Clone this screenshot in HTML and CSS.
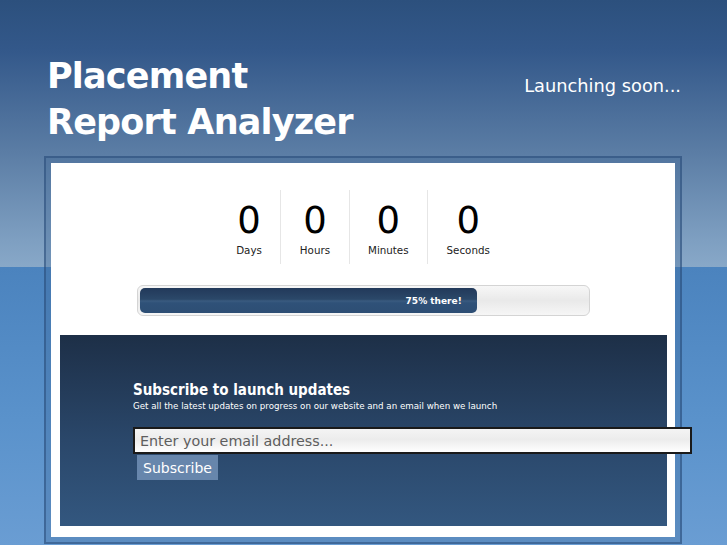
FILE: index.html
```html
<!DOCTYPE html>
<html lang="en">
<head>
<meta charset="utf-8">
<title>Placement Report Analyzer</title>
<link rel="stylesheet" href="styles.css">
</head>
<body>
<div class="page">
  <header class="header">
    <h1 class="title">Placement<br>Report Analyzer</h1>
    <p class="tagline">Launching soon...</p>
  </header>
  <div class="frame">
    <div class="card">
      <div class="countdown">
        <div class="unit"><span class="num">0</span><span class="label">Days</span></div>
        <div class="unit"><span class="num">0</span><span class="label">Hours</span></div>
        <div class="unit"><span class="num">0</span><span class="label">Minutes</span></div>
        <div class="unit"><span class="num">0</span><span class="label">Seconds</span></div>
      </div>
      <div class="progress">
        <div class="progress-fill" style="width:75%"><span class="progress-text">75% there!</span></div>
      </div>
      <section class="subscribe">
        <h2 class="sub-title">Subscribe to launch updates</h2>
        <p class="sub-text">Get all the latest updates on progress on our website and an email when we launch</p>
        <form class="sub-form">
          <input class="email" type="text" placeholder="Enter your email address...">
          <button class="btn" type="button">Subscribe</button>
        </form>
      </section>
    </div>
  </div>
</div>
</body>
</html>
```
FILE: styles.css
```css
html, body {
  margin: 0;
  padding: 0;
  height: 100%;
}
body {
  font-family: "DejaVu Sans", sans-serif;
  background: linear-gradient(to bottom,
    #2c507d 0px,
    #33588a 50px,
    #5a7ca4 150px,
    #7e9fc1 240px,
    #88a8c8 267px,
    #4b83be 267px,
    #5a92cb 420px,
    #6a9dd3 545px);
  min-height: 545px;
  overflow: hidden;
}
.page {
  width: 638px;
  margin-left: 44px;
  padding-top: 53px;
}
.header {
  display: flex;
  justify-content: space-between;
  align-items: flex-start;
  padding: 0 1px 0 3px;
  height: 103px;
}
.title {
  margin: 0;
  font-size: 35px;
  line-height: 46px;
  font-weight: bold;
  color: #fff;
  letter-spacing: -0.8px;
}
.tagline {
  margin: 22px 0 0;
  font-size: 17.8px;
  color: #fff;
}
.frame {
  border: 2px solid rgba(40, 75, 120, 0.55);
  padding: 5px;
  background: rgba(50, 90, 140, 0.25);
  height: 374px;
  box-sizing: content-box;
}
.card {
  background: #fff;
  height: 374px;
  padding: 27px 8px 0 9px;
  box-sizing: border-box;
  display: flex;
  flex-direction: column;
  align-items: center;
}
.countdown {
  display: flex;
  margin-left: -1px;
}
.unit {
  display: flex;
  flex-direction: column;
  align-items: center;
  padding: 9px 18.5px 7px;
  border-left: 1px solid #e6e6e6;
}
.unit:first-child {
  border-left: none;
}
.num {
  font-size: 37px;
  line-height: 44px;
  color: #000;
}
.label {
  font-size: 10.3px;
  line-height: 14px;
  color: #222;
}
.progress {
  margin-top: 21px;
  width: 453px;
  height: 31px;
  box-sizing: border-box;
  border: 1px solid #d4d4d4;
  border-radius: 6px;
  padding: 2px 0 2px 2px;
  background: linear-gradient(to bottom, #f7f7f7, #e9e9e9 50%, #f6f6f6);
}
.progress-fill {
  height: 25px;
  border-radius: 5px;
  background: linear-gradient(to bottom, #22395a 0%, #2b4869 45%, #3a5b80 52%, #2f5178 60%, #2d4e74 100%);
  display: flex;
  align-items: center;
  justify-content: flex-end;
  padding-right: 15px;
  box-sizing: border-box;
}
.progress-text {
  font-size: 9px;
  font-weight: bold;
  color: #fff;
}
.subscribe {
  margin-top: 19px;
  align-self: stretch;
  height: 191px;
  box-sizing: border-box;
  padding: 45px 0 0 73px;
  background: linear-gradient(to bottom, #1d2f47 0%, #2a476a 55%, #33577f 100%);
}
.sub-title {
  margin: 0;
  font-family: "DejaVu Sans Condensed", "DejaVu Sans", sans-serif;
  font-size: 15px;
  line-height: 20px;
  font-weight: bold;
  color: #fff;
}
.sub-text {
  margin: 0;
  font-family: "DejaVu Sans", sans-serif;
  font-size: 8.7px;
  line-height: 12px;
  color: #fff;
}
.sub-form {
  margin: 15px 0 0;
  display: flex;
  flex-direction: column;
  align-items: flex-start;
}
.email {
  width: 559px;
  height: 27px;
  box-sizing: border-box;
  margin: 0;
  border: 2px solid #1a1a1a;
  padding: 0 5px;
  font-family: "DejaVu Sans", sans-serif;
  font-size: 14.3px;
  color: #555;
  background: linear-gradient(to bottom, #f4f4f4, #ececec 45%, #ffffff);
  outline: none;
}
.email::placeholder {
  color: #5e5e5e;
}
.btn {
  margin: 1px 0 0 4px;
  width: 81px;
  height: 25px;
  border: none;
  padding: 0;
  background: #6786ac;
  color: #fff;
  font-family: "DejaVu Sans", sans-serif;
  font-size: 14px;
}
```
